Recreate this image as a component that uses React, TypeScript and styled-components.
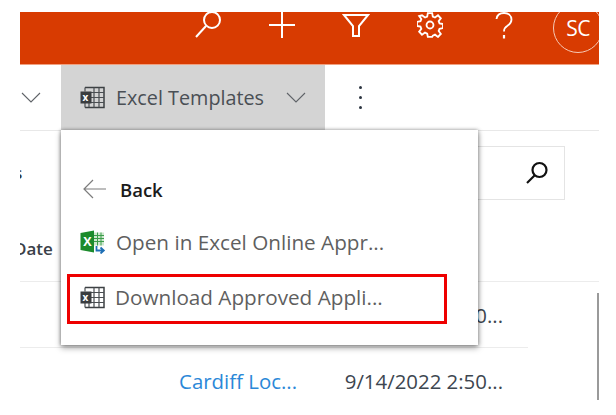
import React from "react";
import styled, { createGlobalStyle } from "styled-components";

const Global = createGlobalStyle`
  html, body { margin: 0; padding: 0; background: #fff; }
  body { font-family: "Open Sans", "Noto Sans", sans-serif; overflow: hidden; }
`;

const Page = styled.div`
  width: 616px;
  height: 415px;
  padding: 12px 17px 0 20px;
  box-sizing: border-box;
  overflow: hidden;
`;

const Main = styled.div`
  position: relative;
  width: 579px;
  height: 403px;
`;

const Header = styled.header`
  display: flex;
  height: 52px;
  padding-left: 151px;
  background: #d83b01;
  overflow: hidden;
  border-bottom: 1px solid #f0a080;
`;

const HeaderButton = styled.div`
  flex: 0 0 74px;
  height: 52px;
  display: flex;
  justify-content: center;
  align-items: flex-start;
  color: #fff;
`;

const Avatar = styled.div`
  flex: 0 0 50px;
  height: 50px;
  margin: -9px 0 0 12px;
  border: 1.5px solid #f6c9b6;
  border-radius: 50%;
  box-sizing: border-box;
  display: flex;
  align-items: center;
  justify-content: center;
  color: #fff;
  font-size: 21px;
  letter-spacing: -0.5px;
`;

const CommandBar = styled.div`
  display: flex;
  height: 65px;
  align-items: stretch;
  border-bottom: 1px solid #e8e8e8;
`;

const LeadChevron = styled.div`
  flex: 0 0 41px;
  display: flex;
  align-items: center;
  padding-left: 1px;
  box-sizing: border-box;
`;

const ActiveCommand = styled.div`
  flex: 0 0 264px;
  display: flex;
  align-items: center;
  padding-left: 19px;
  box-sizing: border-box;
  background: #d4d4d4;
  color: #4a4f55;
  font-size: 19.8px;
  white-space: nowrap;
`;

const CommandLabel = styled.span`
  margin: 0 21px 0 11px;
  width: 149px;
`;

const Kebab = styled.div`
  flex: 0 0 auto;
  display: flex;
  flex-direction: column;
  gap: 7px;
  justify-content: center;
  margin-left: 34px;
`;

const Dot = styled.i`
  display: block;
  width: 3px;
  height: 3px;
  border-radius: 50%;
  background: #2b3440;
`;

const FilterRow = styled.div`
  display: flex;
  height: 87px;
  overflow: hidden;
  padding-top: 15px;
  box-sizing: border-box;
`;

const ClippedLabel = styled.span`
  font-size: 17px;
  line-height: 54px;
  height: 54px;
  margin-left: -6px;
  width: 11px;
  color: #333;
  font-weight: 600;
`;

const SearchBox = styled.div`
  flex: 0 0 auto;
  margin-left: 390px;
  width: 150px;
  height: 54px;
  border: 1px solid #e4e4e4;
  box-sizing: border-box;
  display: flex;
  align-items: center;
  justify-content: flex-end;
  padding-right: 15px;
`;

const TableHead = styled.div`
  height: 64px;
  display: flex;
  align-items: center;
  overflow: hidden;
  border-bottom: 1px solid #ececec;
  padding-bottom: 3px;
  box-sizing: border-box;
`;

const HeadCell = styled.span`
  margin-left: -6px;
  font-size: 17px;
  font-weight: 600;
  color: #3a4048;
`;

const TableRow = styled.div`
  display: grid;
  grid-template-columns: 160px 323px;
  align-items: center;
  height: 66px;
  width: 508px;
  box-sizing: border-box;
  border-bottom: ${(p: { $line?: boolean }) => (p.$line ? "1px solid #ececec" : "0")};
  font-size: 20.4px;
  white-space: nowrap;
`;

const LinkCell = styled.span`
  grid-column: 1;
  justify-self: end;
  margin-right: -117px;
  color: #2b88d8;
`;

const DateCell = styled.span`
  grid-column: 2;
  justify-self: end;
  color: #3d4650;
`;

const Scrollbar = styled.div`
  position: absolute;
  left: 577px;
  top: 281px;
  width: 2px;
  height: 107px;
  background: #9a9a9a;
`;

const Menu = styled.div`
  position: absolute;
  left: 41px;
  top: 118px;
  width: 417px;
  height: 215px;
  background: #fff;
  box-shadow: 0 3px 6px rgba(0, 0, 0, 0.35), 1px 0 4px rgba(0, 0, 0, 0.22), -1px 0 3px rgba(0, 0, 0, 0.2);
  padding-top: 36px;
  box-sizing: border-box;
  font-size: 20.7px;
  color: #5f5f5f;
`;

const BackRow = styled.div`
  display: flex;
  align-items: center;
  height: 46px;
  padding-left: 22px;
  color: #1b1b1b;
  font-weight: 600;
  font-size: 18.5px;
`;

const BackLabel = styled.span`
  margin-left: 14px;
`;

const MenuItem = styled.div`
  display: flex;
  align-items: center;
  height: 50px;
  margin-top: 5px;
  padding-left: 19px;
  white-space: nowrap;
`;

const HighlightedItem = styled(MenuItem)`
  width: 380px;
  margin: 7px 0 0 6px;
  padding: 0 0 4px 10px;
  box-sizing: border-box;
  border: 3px solid #ee0000;
`;

const ItemLabel = styled.span`
  margin-left: 10px;
`;

const Chevron = () => (
  <svg width="20" height="11" viewBox="0 0 20 11" fill="none" stroke="#5f6368" strokeWidth="1.1">
    <path d="M1 1l9 9 9-9" />
  </svg>
);

const GridIcon = () => (
  <svg width="25" height="23" viewBox="0 0 25 23" fill="none">
    <path d="M5 1.5h19v20H5" stroke="#3c4043" strokeWidth="1.5" />
    <path d="M5 1.5v4M5 17v4.5M9 6v15M14 1.5v20M19 1.5v20M11 6.5h13M11 11.5h13M11 16.5h13" stroke="#4a4e52" strokeWidth="1.2" />
    <rect x="0.5" y="5.5" width="11" height="12" fill="#3a3d40" />
    <text x="2.4" y="15.3" fontSize="10" fontWeight="700" fill="#fff" fontFamily="Open Sans, sans-serif">x</text>
  </svg>
);

const ExcelOnlineIcon = () => (
  <svg width="26" height="24" viewBox="0 0 26 24" fill="none">
    <path d="M0.5 3L14 0.5v22L0.5 20z" fill="#1c8b2c" />
    <rect x="14" y="2.5" width="10" height="13" fill="#cfe8cf" />
    <path d="M14 5.5h10M14 8.5h10M14 11.5h10M17.5 2.5v13M21 2.5v13" stroke="#3c9d4a" strokeWidth="1" />
    <text x="3.2" y="15.8" fontSize="12.5" fontWeight="700" fill="#fff" fontFamily="Open Sans, sans-serif">X</text>
    <path d="M16.5 16v4.5h7M20.5 17.5l3.3 3-3.3 3" stroke="#1f6fb5" strokeWidth="1.8" />
  </svg>
);

export default function App() {
  return (
    <Page>
      <Global />
      <Main>
        <Header>
          <HeaderButton>
            <svg width="28" height="26" viewBox="0 0 28 26" fill="none" stroke="#fff" strokeWidth="2">
              <circle cx="18" cy="8" r="8" />
              <path d="M12 14L2 25" />
            </svg>
          </HeaderButton>
          <HeaderButton>
            <svg width="26" height="26" viewBox="0 0 26 26" fill="none" stroke="#fff" strokeWidth="2">
              <path d="M0 13h26M13 0v26" />
            </svg>
          </HeaderButton>
          <HeaderButton>
            <svg width="28" height="24" viewBox="0 0 28 24" fill="none" stroke="#fff" strokeWidth="2" style={{ marginTop: 1 }}>
              <path d="M2 2h24l-9 11v10h-6V13z" />
            </svg>
          </HeaderButton>
          <HeaderButton>
            <svg width="26" height="26" viewBox="0 0 24 24" fill="none" stroke="#fff" strokeWidth="1.7">
              <circle cx="12" cy="12" r="3.2" />
              <path d="M10 1h4l.6 3.2 2 .9L19.4 3l2.6 2.8-2 2.7.8 2 3.2.6v3.8l-3.2.6-.8 2 2 2.7-2.6 2.8-2.8-2.1-2 .9L14 23h-4l-.6-3.1-2-.9L4.6 21 2 18.2l2-2.7-.8-2L0 12.900V9.100l3.200-.6.8-2-2-2.700L4.600 3l2.800 2.100 2-.9z" />
            </svg>
          </HeaderButton>
          <HeaderButton>
            <svg width="18" height="27" viewBox="0 0 18 27" fill="none" stroke="#fff" strokeWidth="1.8">
              <path d="M1.500 7C2 3 5 1 9 1c4.500 0 7.500 2.700 7.500 6.500 0 3-1.500 4.500-4 6.300C10 15.300 9 16.500 9 19.500" />
              <path d="M9 23v3.500" strokeWidth="2.200" />
            </svg>
          </HeaderButton>
          <Avatar>SC</Avatar>
        </Header>
        <CommandBar>
          <LeadChevron>
            <Chevron />
          </LeadChevron>
          <ActiveCommand>
            <GridIcon />
            <CommandLabel>Excel Templates</CommandLabel>
            <Chevron />
          </ActiveCommand>
          <Kebab>
            <Dot />
            <Dot />
            <Dot />
          </Kebab>
        </CommandBar>
        <FilterRow>
          <ClippedLabel>s</ClippedLabel>
          <SearchBox>
            <svg width="24" height="24" viewBox="0 0 24 24" fill="none" stroke="#111" strokeWidth="2.200">
              <circle cx="14.500" cy="9" r="7" />
              <path d="M9.500 14.500L2 22" />
            </svg>
          </SearchBox>
        </FilterRow>
        <TableHead>
          <HeadCell>Date</HeadCell>
        </TableHead>
        <TableRow $line>
          <DateCell>9/14/2022 2:50...</DateCell>
        </TableRow>
        <TableRow>
          <LinkCell>Cardiff Loc...</LinkCell>
          <DateCell>9/14/2022 2:50...</DateCell>
        </TableRow>
        <Scrollbar />
        <Menu>
          <BackRow>
            <svg width="23" height="20" viewBox="0 0 23 20" fill="none" stroke="#7d7d7d" strokeWidth="1.200">
              <path d="M23 10H1M10 1l-9 9 9 9" />
            </svg>
            <BackLabel>Back</BackLabel>
          </BackRow>
          <MenuItem>
            <ExcelOnlineIcon />
            <ItemLabel>Open in Excel Online Appr...</ItemLabel>
          </MenuItem>
          <HighlightedItem>
            <GridIcon />
            <ItemLabel>Download Approved Appli...</ItemLabel>
          </HighlightedItem>
        </Menu>
      </Main>
    </Page>
  );
}
